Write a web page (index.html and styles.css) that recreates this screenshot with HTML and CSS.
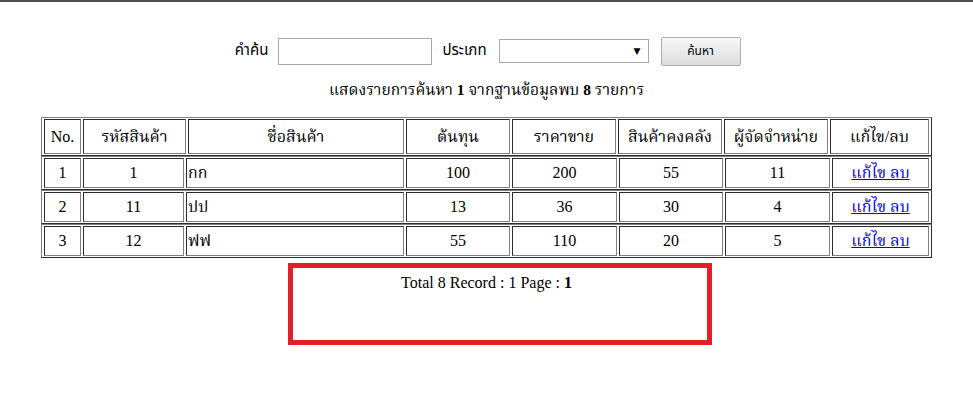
FILE: index.html
```html
<!DOCTYPE html>
<html lang="th">
<head>
<meta charset="utf-8">
<title>ค้นหาสินค้า</title>
<link rel="stylesheet" href="styles.css">
</head>
<body>
<div class="topbar"></div>
<form class="search">
  <label class="lbl lbl-key">คำค้น</label>
  <input class="txt" type="text">
  <label class="lbl lbl-type">ประเภท</label>
  <span class="sel-wrap"><select class="sel"><option></option></select><span class="arrow">&#9660;</span></span>
  <button class="btn" type="button">ค้นหา</button>
</form>
<p class="info">แสดงรายการค้นหา <b>1</b> จากฐานข้อมูลพบ <b>8</b> รายการ</p>
<div class="grid">
  <table class="tbl head">
    <tr>
      <td class="c-no">No.</td>
      <td class="c-code">รหัสสินค้า</td>
      <td class="c-name">ชื่อสินค้า</td>
      <td class="c-cost">ต้นทุน</td>
      <td class="c-price">ราคาขาย</td>
      <td class="c-stock">สินค้าคงคลัง</td>
      <td class="c-sup">ผู้จัดจำหน่าย</td>
      <td class="c-act">แก้ไข/ลบ</td>
    </tr>
  </table>
  <table class="tbl body">
    <tr>
      <td class="c-no">1</td>
      <td class="c-code">1</td>
      <td class="c-name left">กก</td>
      <td class="c-cost">100</td>
      <td class="c-price">200</td>
      <td class="c-stock">55</td>
      <td class="c-sup">11</td>
      <td class="c-act"><a href="#">แก้ไข </a><a href="#">ลบ</a></td>
    </tr>
  </table>
  <table class="tbl body">
    <tr>
      <td class="c-no">2</td>
      <td class="c-code">11</td>
      <td class="c-name left">ปป</td>
      <td class="c-cost">13</td>
      <td class="c-price">36</td>
      <td class="c-stock">30</td>
      <td class="c-sup">4</td>
      <td class="c-act"><a href="#">แก้ไข </a><a href="#">ลบ</a></td>
    </tr>
  </table>
  <table class="tbl body">
    <tr>
      <td class="c-no">3</td>
      <td class="c-code">12</td>
      <td class="c-name left">ฟฟ</td>
      <td class="c-cost">55</td>
      <td class="c-price">110</td>
      <td class="c-stock">20</td>
      <td class="c-sup">5</td>
      <td class="c-act"><a href="#">แก้ไข </a><a href="#">ลบ</a></td>
    </tr>
  </table>
</div>
<p class="pager">Total 8 Record : 1 Page : <b>1</b></p>
<div class="highlight"></div>
</body>
</html>
```
FILE: styles.css
```css
html, body {
  margin: 0;
  padding: 0;
  background: #ffffff;
}
body {
  position: relative;
  width: 973px;
  height: 418px;
  overflow: hidden;
  color: #000;
  font-family: "Liberation Serif", "Noto Serif Thai", "Noto Sans Thai", Tahoma, "DejaVu Sans", serif;
  font-size: 16px;
}
.topbar {
  height: 2px;
  background: #4d4d4d;
}
.search {
  display: flex;
  justify-content: center;
  align-items: center;
  height: 30px;
  margin: 34px 0 0 0;
  font-family: "Noto Sans Thai", Tahoma, "DejaVu Sans", "Noto Sans", sans-serif;
  font-size: 15px;
}
.lbl {
  display: inline-block;
  line-height: 20px;
}
.lbl-key {
  width: 38px;
  text-align: center;
  margin-right: 7px;
}
.lbl-type {
  width: 46px;
  text-align: center;
  margin: 0 11px 0 10px;
}
.txt {
  box-sizing: border-box;
  width: 154px;
  height: 27px;
  margin: 0;
  padding: 2px 4px;
  border: 1px solid #a9a9a9;
  background: #fff;
  outline: none;
}
.sel-wrap {
  position: relative;
  display: inline-block;
  width: 150px;
  height: 24px;
}
.sel {
  -webkit-appearance: none;
  appearance: none;
  box-sizing: border-box;
  width: 150px;
  height: 24px;
  margin: 0;
  border: 1px solid #a9a9a9;
  border-radius: 0;
  background: #fff;
}
.arrow {
  position: absolute;
  right: 8px;
  top: 5px;
  font-size: 9px;
  line-height: 14px;
  color: #000;
  font-family: "DejaVu Sans", sans-serif;
  pointer-events: none;
}
.btn {
  box-sizing: border-box;
  width: 80px;
  height: 29px;
  margin: 0 0 0 12px;
  padding: 0;
  border: 1px solid #adadad;
  border-radius: 2px;
  background: linear-gradient(#f7f7f7, #dddddd);
  font-family: "Noto Sans Thai", Tahoma, "DejaVu Sans", sans-serif;
  font-size: 12px;
  color: #000;
}
.info {
  margin: 14px 0 0 0;
  height: 20px;
  line-height: 20px;
  text-align: center;
  font-size: 15.5px;
}
.grid {
  margin-top: 17px;
  display: flex;
  flex-direction: column;
  align-items: center;
}
.tbl {
  border-collapse: separate;
  border-spacing: 2px 1px;
  border: 1px outset #808080;
  table-layout: fixed;
}
.tbl td {
  box-sizing: border-box;
  border: 1px inset #808080;
  padding: 0 1px;
  text-align: center;
  vertical-align: middle;
  line-height: 20px;
  white-space: nowrap;
}
.tbl td.left { text-align: left; }
.head td { height: 35px; }
.body td { height: 30px; }

.head .c-no { width: 37px; }
.head .c-code { width: 103px; }
.head .c-name { width: 216px; }
.head .c-cost { width: 104px; }
.head .c-price { width: 104px; }
.head .c-stock { width: 104px; }
.head .c-sup { width: 104px; }
.head .c-act { width: 99px; }

.body .c-no { width: 37px; }
.body .c-code { width: 101px; }
.body .c-name { width: 218px; }
.body .c-cost { width: 104px; }
.body .c-price { width: 105px; }
.body .c-stock { width: 104px; }
.body .c-sup { width: 105px; }
.body .c-act { width: 97px; }

.tbl a {
  color: #0000ee;
  text-decoration: underline;
}
.pager {
  margin: 15px 0 0 0;
  line-height: 20px;
  text-align: center;
  font-size: 16px;
}
.highlight {
  position: absolute;
  left: 288px;
  top: 263px;
  width: 414px;
  height: 72px;
  border: 5px solid #e3202a;
}
```
